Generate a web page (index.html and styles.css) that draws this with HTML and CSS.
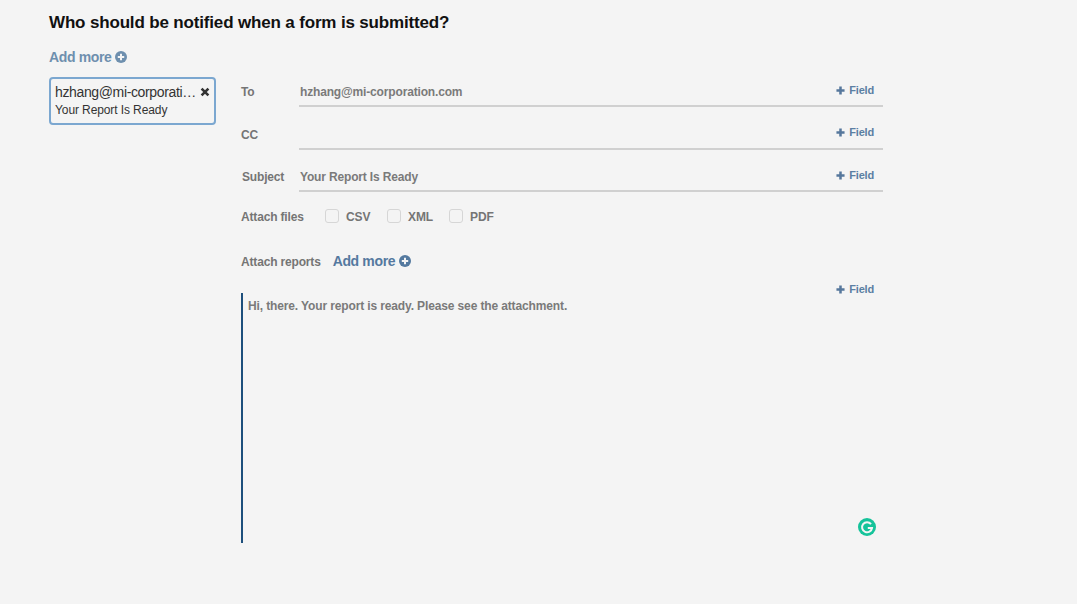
FILE: index.html
```html
<!DOCTYPE html>
<html lang="en">
<head>
<meta charset="utf-8">
<title>Notifications</title>
<link rel="stylesheet" href="styles.css">
</head>
<body>
<div class="page">
  <h1 class="title">Who should be notified when a form is submitted?</h1>
  <a class="add add-top">Add more
    <svg class="plus-circle" viewBox="0 0 12 12"><circle cx="6" cy="6" r="6"/><path class="cross" d="M6 2.8v6.4M2.8 6h6.4"/></svg>
  </a>
  <div class="columns">
    <aside class="side">
      <div class="card">
        <div class="card-top">
          <span class="card-mail">hzhang@mi-corporation.com</span>
          <svg class="close" viewBox="0 0 10 10"><path d="M1.6 1.6l6.8 6.8M8.4 1.6l-6.8 6.8"/></svg>
        </div>
        <div class="card-sub">Your Report Is Ready</div>
      </div>
    </aside>
    <main class="form">
      <div class="row row-to">
        <span class="label">To</span>
        <div class="input"><span class="value">hzhang@mi-corporation.com</span><a class="field"><svg class="plus" viewBox="0 0 10 10"><path d="M5 .5v9M.5 5h9"/></svg>Field</a></div>
      </div>
      <div class="row row-cc">
        <span class="label">CC</span>
        <div class="input"><span class="value"></span><a class="field"><svg class="plus" viewBox="0 0 10 10"><path d="M5 .5v9M.5 5h9"/></svg>Field</a></div>
      </div>
      <div class="row row-subject">
        <span class="label label-subject">Subject</span>
        <div class="input"><span class="value">Your Report Is Ready</span><a class="field"><svg class="plus" viewBox="0 0 10 10"><path d="M5 .5v9M.5 5h9"/></svg>Field</a></div>
      </div>
      <div class="files">
        <span class="label label-files">Attach files</span>
        <span class="check"><i class="box"></i>CSV</span>
        <span class="check"><i class="box"></i>XML</span>
        <span class="check"><i class="box"></i>PDF</span>
      </div>
      <div class="reports">
        <span class="label">Attach reports</span>
        <a class="add add-inline">Add more
          <svg class="plus-circle" viewBox="0 0 12 12"><circle cx="6" cy="6" r="6"/><path class="cross" d="M6 2.8v6.4M2.8 6h6.4"/></svg>
        </a>
      </div>
      <div class="body-wrap">
        <a class="field field-body"><svg class="plus" viewBox="0 0 10 10"><path d="M5 .5v9M.5 5h9"/></svg>Field</a>
        <div class="editor">
          <p class="message">Hi, there. Your report is ready. Please see the attachment.</p>
          <svg class="grammarly" viewBox="0 0 18 18"><circle cx="9" cy="9" r="9"/><path d="M13 6.2A5 5 0 1 0 14 10H9.8"/></svg>
        </div>
      </div>
    </main>
  </div>
</div>
</body>
</html>
```

FILE: styles.css
```css
* { box-sizing: border-box; }
html, body { margin: 0; height: 100%; }
body {
  background: #f4f4f4;
  font-family: "Liberation Sans", Arial, sans-serif;
  color: #6f6f6f;
  overflow: hidden;
}
.page { padding: 13px 0 0 49px; width: 883px; }
.title {
  margin: 0;
  font-size: 17px;
  line-height: 19px;
  font-weight: bold;
  color: #111;
  letter-spacing: -0.16px;
}
.add {
  display: inline-flex;
  align-items: center;
  gap: 3px;
  font-size: 14px;
  line-height: 16px;
  font-weight: bold;
  letter-spacing: -0.35px;
}
.add-top { margin-top: 17px; color: #6e8fae; }
.add-inline { margin-left: 12px; gap: 4px; color: #54799f; position: relative; top: -1px; }
.plus-circle { width: 12px; height: 12px; fill: currentColor; }
.plus-circle .cross { fill: none; stroke: #f4f4f4; stroke-width: 2; }
.columns { display: flex; margin-top: 11px; }
.side { width: 192px; flex: none; }
.card {
  width: 167px;
  height: 48px;
  border: 2px solid #7ba7d0;
  border-radius: 4px;
  padding: 4px 4px 0;
  color: #333;
}
.card-top { display: flex; align-items: center; gap: 3px; height: 18px; }
.card-mail {
  flex: 1;
  min-width: 0;
  font-size: 14px;
  line-height: 18px;
  letter-spacing: -0.36px;
  white-space: nowrap;
  overflow: hidden;
  text-overflow: ellipsis;
}
.close { width: 10px; height: 10px; flex: none; fill: none; stroke: #333; stroke-width: 2.6; }
.card-sub { font-size: 12px; line-height: 15px; margin-top: 2px; letter-spacing: -0.1px; }
.form { flex: 1; min-width: 0; }
.row { display: flex; }
.row-to { height: 30px; }
.row-cc { height: 43px; padding-top: 13px; }
.row-subject { height: 42px; padding-top: 12px; }
.label { font-size: 12px; line-height: 14px; font-weight: bold; color: #757575; letter-spacing: -0.17px; }
.row .label { width: 58px; flex: none; padding-top: 8px; }
.row .label-subject { padding-left: 1px; }
.input {
  flex: 1;
  display: flex;
  justify-content: space-between;
  border-bottom: 2px solid #d0d0d0;
  padding: 0 9px 0 1px;
}
.value { font-size: 12px; line-height: 14px; font-weight: bold; padding-top: 8px; color: #7a7a7a; letter-spacing: -0.16px; }
.field {
  display: inline-flex;
  align-items: center;
  gap: 4px;
  font-size: 11px;
  line-height: 13px;
  font-weight: bold;
  color: #5b7fa3;
  letter-spacing: -0.2px;
  padding-top: 7px;
  height: 20px;
}
.row-cc .field { padding-top: 6px; height: 19px; }
.plus { width: 9px; height: 9px; fill: none; stroke: #56779c; stroke-width: 2.8; }
.files { display: flex; align-items: center; height: 18px; margin-top: 16px; }
.label-files { width: 84px; flex: none; }
.check {
  display: inline-flex;
  align-items: center;
  width: 62px;
  flex: none;
  font-size: 12px;
  font-weight: bold;
  color: #757575;
  letter-spacing: -0.1px;
}
.box {
  width: 14px;
  height: 14px;
  margin: -2px 7px 0 0;
  border: 1px solid #d6d6d6;
  border-radius: 3px;
  background: #f4f4f4;
}
.reports { display: flex; align-items: center; margin-top: 28px; height: 16px; }
.body-wrap { position: relative; margin-top: 23px; }
.field-body { position: absolute; right: 9px; top: -17px; }
.editor {
  position: relative;
  height: 250px;
  border-left: 2px solid #1d4f7c;
  padding: 6px 5px;
}
.message { margin: 0; font-size: 12px; line-height: 14px; font-weight: bold; color: #7a7a7a; letter-spacing: -0.13px; }
.grammarly { position: absolute; left: 615px; top: 225px; width: 18px; height: 18px; }
.grammarly circle { fill: #15c39a; }
.grammarly path { fill: none; stroke: #f4f4f4; stroke-width: 2; }
```
